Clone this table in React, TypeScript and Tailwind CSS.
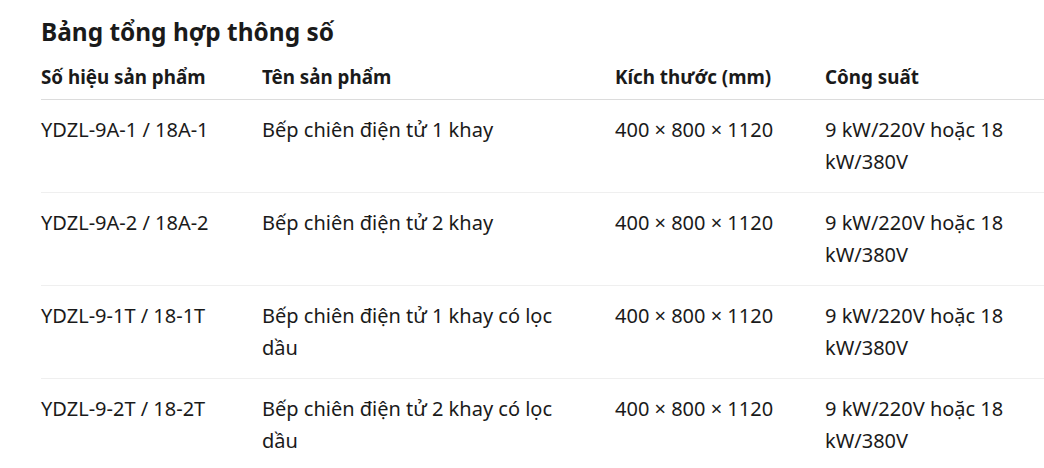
const rows = [
  { code: 'YDZL-9A-1 / 18A-1', name: 'Bếp chiên điện tử 1 khay', size: '400 × 800 × 1120', power: '9 kW/220V hoặc 18 kW/380V' },
  { code: 'YDZL-9A-2 / 18A-2', name: 'Bếp chiên điện tử 2 khay', size: '400 × 800 × 1120', power: '9 kW/220V hoặc 18 kW/380V' },
  { code: 'YDZL-9-1T / 18-1T', name: 'Bếp chiên điện tử 1 khay có lọc dầu', size: '400 × 800 × 1120', power: '9 kW/220V hoặc 18 kW/380V' },
  { code: 'YDZL-9-2T / 18-2T', name: 'Bếp chiên điện tử 2 khay có lọc dầu', size: '400 × 800 × 1120', power: '9 kW/220V hoặc 18 kW/380V' },
];

export default function App() {
  return (
    <div className="w-[1044px] h-[468px] overflow-hidden bg-white pl-[41px] pt-[16px] font-['Noto_Sans',sans-serif] text-[#1a1a1a]">
      <h2 className="text-[24.4px] leading-[32px] font-bold">Bảng tổng hợp thông số</h2>

      <table className="w-full table-fixed border-collapse mt-[13px] text-[20px] leading-[32px]">
        <colgroup>
          <col className="w-[221px]" />
          <col className="w-[353px]" />
          <col className="w-[210px]" />
          <col />
        </colgroup>
        <thead>
          <tr className="border-b border-[#dcdcdc] text-[18.8px]">
            <th className="text-left font-bold pb-[6px] pr-4">Số hiệu sản phẩm</th>
            <th className="text-left font-bold pb-[6px] pr-4">Tên sản phẩm</th>
            <th className="text-left font-bold pb-[6px] pr-4">Kích thước (mm)</th>
            <th className="text-left font-bold pb-[6px] pr-4">Công suất</th>
          </tr>
        </thead>
        <tbody>
          {rows.map((r) => (
            <tr key={r.code} className="border-b border-[#efefef] align-top">
              <td className="pt-[14px] pb-[14px] pr-4">{r.code}</td>
              <td className="pt-[14px] pb-[14px] pr-[40px]">{r.name}</td>
              <td className="pt-[14px] pb-[14px] pr-4">{r.size}</td>
              <td className="pt-[14px] pb-[14px] pr-4">{r.power}</td>
            </tr>
          ))}
        </tbody>
      </table>
    </div>
  );
}
